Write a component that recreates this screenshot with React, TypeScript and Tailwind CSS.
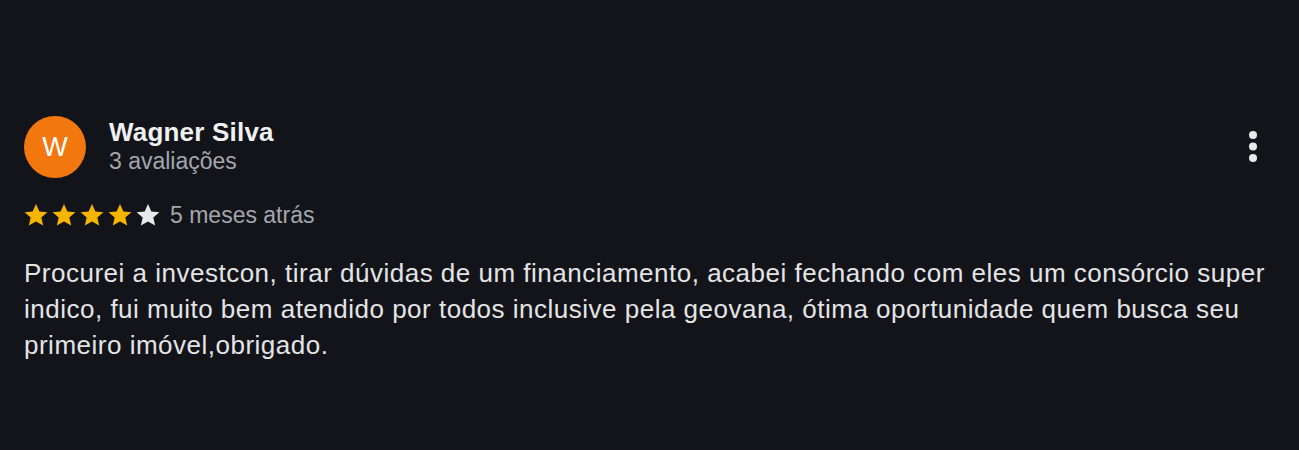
function Star({ filled }: { filled: boolean }) {
  return (
    <svg width="28" height="26" viewBox="0 0 24 24" className={filled ? 'text-[#f7b500]' : 'text-[#e6e8ec]'}>
      <path
        fill="currentColor"
        d="M12 1.8l3.1 6.9 7.4.7-5.6 5 1.7 7.4L12 17.9l-6.6 3.9 1.7-7.4-5.6-5 7.4-.7z"
      />
    </svg>
  );
}

function Dots() {
  return (
    <svg width="10" height="32" viewBox="0 0 10 32" className="text-[#e9e9ec]">
      <circle cx="5" cy="4" r="4" fill="currentColor" />
      <circle cx="5" cy="15.5" r="4" fill="currentColor" />
      <circle cx="5" cy="27" r="4" fill="currentColor" />
    </svg>
  );
}

export default function App() {
  const rating = 4;

  return (
    <div className="min-h-screen bg-[#12141a] text-[#e4e4e6] font-['Liberation_Sans',Arial,sans-serif]">
      <div className="pt-[116px] px-6">
        {/* Header */}
        <div className="flex items-start">
          <div className="w-[62px] h-[62px] rounded-full bg-[#f2770f] flex items-center justify-center text-white text-[27px] shrink-0">
            W
          </div>
          <div className="ml-[23px] pt-[1px]">
            <div className="text-[26px] font-bold leading-[30px] tracking-[0.2px] text-[#f1f1f3]">Wagner Silva</div>
            <div className="text-[23px] leading-[28px] text-[#a3a6ad]">3 avaliações</div>
          </div>
          <button className="ml-auto mt-[15px] mr-[17px]">
            <Dots />
          </button>
        </div>

        {/* Rating */}
        <div className="flex items-center mt-[20px]">
          <div className="flex -ml-[2px]">
            {[0, 1, 2, 3, 4].map((i) => (
              <Star key={i} filled={i < rating} />
            ))}
          </div>
          <span className="ml-[8px] text-[23px] text-[#a3a6ad]">5 meses atrás</span>
        </div>

        {/* Body */}
        <p className="mt-[22px] text-[26px] leading-[36px] tracking-[0.5px] text-[#e4e4e6] max-w-[1260px]">
          Procurei a investcon, tirar dúvidas de um financiamento, acabei fechando com eles um consórcio super
          indico, fui muito bem atendido por todos inclusive pela geovana, ótima oportunidade quem busca seu
          primeiro imóvel,obrigado.
        </p>
      </div>
    </div>
  );
}
